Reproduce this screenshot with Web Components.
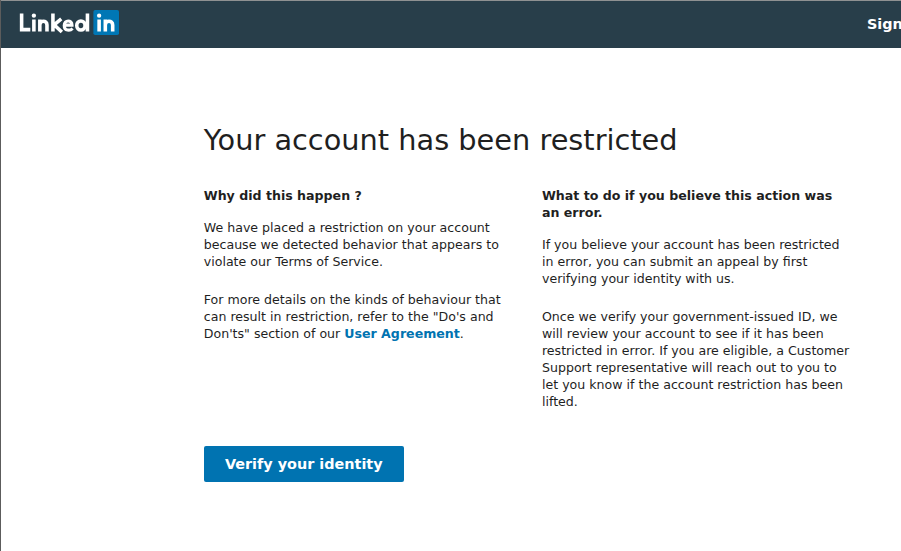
<!DOCTYPE html>
<html lang="en"><head><meta charset="utf-8"><title>Account restricted</title>
<style>body{margin:0;background:#fff;font-family:"DejaVu Sans",sans-serif;color:#1f1f1f;overflow:hidden}</style></head><body>
<account-page></account-page>
<script>
const define=(n,html)=>customElements.define(n,class extends HTMLElement{constructor(){super();this.attachShadow({mode:'open'}).innerHTML=html;}});
define('brand-logo',`<style>:host{display:block;width:100px;height:25px}svg{display:block}</style>
<svg width="100" height="25" viewBox="0 0 84 21"><rect x="62.500" y="0" width="21.500" height="21" rx="1.500" fill="#0077b5"/>
<g fill="none" stroke="#fff" stroke-width="3"><path d="M2.200 3V16.500H9.500M12.500 8V18M17.500 18V8M17.500 12.500C17.500 8.500 23.500 8.500 23.500 12.500V18M28.500 3V18M35.500 7.500L29.500 12.500L36 18.500"/><path stroke-width="2.600" d="M38 12.700H44.500C44.500 8 38 8 38 13C38 17.800 43 17.600 45 15.500"/><ellipse cx="52" cy="13" rx="3.500" ry="3.800"/><path d="M57.500 3V18M67.300 8V18M72.500 18V8M72.500 12.500C72.500 8.500 78.700 8.500 78.700 12.500V18"/></g><circle cx="12.500" cy="4.800" r="1.800" fill="#fff"/><circle cx="67.300" cy="4.800" r="1.800" fill="#fff"/></svg>`);
define('top-bar',`<style>:host{display:flex;justify-content:space-between;box-sizing:border-box;height:48px;padding:9px 0 0 18.300px;background:#283e4a;border-top:1px solid #8f9192;overflow:hidden}span{width:34px;white-space:nowrap;color:#fff;font:bold 14.4px/28px "DejaVu Sans",sans-serif}</style><brand-logo></brand-logo><span><slot></slot></span>`);
define('info-section',`<style>:host{display:block;font-size:12.6px;line-height:17px}h2{font-size:12.6px;line-height:17px;margin:0 0 15px}::slotted(p){margin:0 0 21px;white-space:nowrap}</style><h2><slot name="title"></slot></h2><slot></slot>`);
define('primary-button',`<style>:host{display:block}button{width:200px;height:36px;border:0;border-radius:2px;background:#0073b1;color:#fff;font:bold 14.4px "DejaVu Sans",sans-serif;padding:0;display:block}</style><button><slot></slot></button>`);
define('account-page',`<style>:host{display:block;box-sizing:border-box;height:551px;border-left:1px solid #5c5c5c}main{padding:73px 0 0 202.750px}h1{font-size:28.800px;font-weight:400;line-height:38px;margin:0 0 28px;white-space:nowrap}.columns{display:grid;grid-template-columns:338.200px 310px;height:259px}b.link{color:#0073b1}</style>
<top-bar>Sign</top-bar><main><h1>Your account has been restricted</h1><div class="columns">
<info-section><span slot="title">Why did this happen ?</span><p>We have placed a restriction on your account<br>because we detected behavior that appears to<br>violate our Terms of Service.</p><p>For more details on the kinds of behaviour that<br>can result in restriction, refer to the "Do's and<br>Don'ts" section of our <b class="link">User Agreement</b>.</p></info-section>
<info-section><span slot="title">What to do if you believe this action was<br>an error.</span><p>If you believe your account has been restricted<br>in error, you can submit an appeal by first<br>verifying your identity with us.</p><p>Once we verify your government-issued ID, we<br>will review your account to see if it has been<br>restricted in error. If you are eligible, a Customer<br>Support representative will reach out to you to<br>let you know if the account restriction has been<br>lifted.</p></info-section></div><primary-button>Verify your identity</primary-button></main>`);
</script></body></html>
